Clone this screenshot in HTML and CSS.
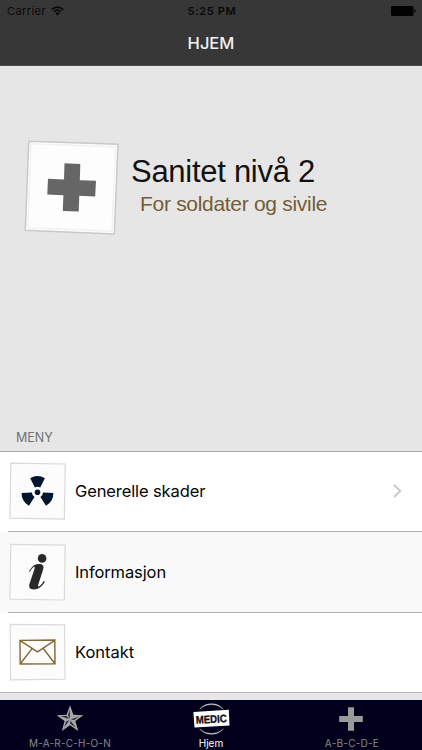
FILE: index.html
```html
<!DOCTYPE html>
<html lang="no">
<head>
<meta charset="utf-8">
<title>Hjem</title>
<link rel="stylesheet" href="styles.css">
</head>
<body>
<div class="app">
  <header class="topbar">
    <div class="status">
      <div class="carrier"><span class="carrier-name">Carrier</span>
        <svg class="wifi" width="13" height="10" viewBox="0 0 13 10" fill="none" stroke="#090909" stroke-width="1.7"><path d="M.8 3.5Q6.5-1.4 12.2 3.5M2.8 5.6Q6.5 2.5 10.2 5.6"/><path d="M4.3 7.2Q6.5 5.4 8.7 7.2L6.5 9.5Z" fill="#090909" stroke="none"/></svg>
      </div>
      <span class="time">5:25 PM</span>
      <svg class="battery" width="25" height="10" viewBox="0 0 25 10"><rect width="22.5" height="10" rx="1.5"/><path d="M23.3 3.2Q24.8 3.6 24.8 5T23.3 6.8Z"/></svg>
    </div>
    <h1 class="title">HJEM</h1>
  </header>
  <main class="content">
    <section class="hero">
      <svg class="hero-icon" width="96" height="97" viewBox="23 139 96 97"><path d="M28.8 141.2L118 144.3L114.3 234L25.3 230.3Z" fill="#fdfdfd" stroke="#c9c9c9" stroke-width="1.5"/><path d="M31 143.8L115.5 146.7L112 231.3L28 227.7Z" fill="none" stroke="#f2f2f2" stroke-width="1.5"/><path d="M64.5 163.3L80.3 164L79.8 180.2L96 180.8L95.2 196.5L79.3 195.7L78.7 211.5L62.8 211L63.4 195.2L47.3 194.5L48 178.7L64 179.4Z" fill="#666"/></svg>
      <div class="hero-text"><div class="name">Sanitet nivå 2</div><div class="tagline">For soldater og sivile</div></div>
    </section>
    <h2 class="section-title">MENY</h2>
    <ul class="menu">
      <li class="row">
        <svg class="tile" width="58" height="58" viewBox="0 0 58 58"><path d="M1.8 1.2L56.3 2L55.3 57.2L1 56.2Z" fill="#fcfcfc" stroke="#dadada" stroke-width="1.2"/><g fill="#04152f"><circle cx="28.5" cy="30.3" r="2.8"/><path id="blade" d="M25.9 25.4L21.2 16.2Q28.5 11.8 35.9 16.2L31.2 25.4Q28.5 24 25.9 25.4Z"/><use href="#blade" transform="rotate(120 28.5 30.3)"/><use href="#blade" transform="rotate(240 28.5 30.3)"/></g></svg>
        <span class="label general">Generelle skader</span>
        <svg class="chevron" width="9" height="14" viewBox="0 0 9 14" fill="none" stroke="#c7c7cc" stroke-width="1.9"><path d="M1 1L7.2 7L1 13"/></svg>
      </li>
      <li class="row alt">
        <svg class="tile" width="58" height="58" viewBox="0 0 58 58"><path d="M1.8 1.4L56.2 2.2L55.3 57L1 56.2Z" fill="#fcfcfc" stroke="#dadada" stroke-width="1.2"/><g fill="#292929"><circle cx="33.1" cy="15.4" r="4.3"/><path d="M20 28.5C22.7 23.4 25.7 21 30 21C34.7 21 35.1 23.2 34 27.1L29.3 41.4C28.6 43.9 29.9 43.9 31.2 42.6C32.7 41.2 33.7 39.7 34.7 38L35.8 38.8C33.2 43.6 29.2 46.5 24.9 46.5C20.4 46.5 19.4 44 20.7 40.3L25.4 26.3C26.2 23.8 25.4 23.2 24 24.6C22.8 25.7 22 27 21 28.7Z"/></g></svg>
        <span class="label info">Informasjon</span>
      </li>
      <li class="row">
        <svg class="tile" width="58" height="58" viewBox="0 0 58 58"><path d="M1.2 1.4L55.5 1.8L56 56.2L1.6 56.8Z" fill="#fcfcfc" stroke="#dadada" stroke-width="1.2"/><path d="M11 17.4L45.8 17.1L46 40.7L11.2 41ZM11.2 17.6L28.5 28.8L45.8 17.3M11.3 40.8L23 25.6M45.8 40.5L34.1 25.3" fill="none" stroke="#82693a" stroke-width="1.45"/></svg>
        <span class="label contact">Kontakt</span>
      </li>
    </ul>
  </main>
  <nav class="tabs">
    <a class="tab"><svg width="36" height="36" viewBox="0 0 36 36"><path d="M18 5.2L21.4 14.7L31.4 15.2L23.4 20.9L26.2 31L18 25.3L9.8 31L12.6 20.9L4.6 15.2L14.6 14.7Z" fill="#a6a6a8"/><path d="M17.8 9.5V19L16 15.2ZM18.8 19.4L27.5 16.2L22 20ZM18.2 20.6L23.8 27.6L18.2 23.8ZM17.3 20.2L12.3 27L14.2 21.5ZM16.9 19L8.5 16.1L14.6 16.1Z" fill="#242535"/></svg><span class="march">M-A-R-C-H-O-N</span></a>
    <a class="tab active"><svg class="medic" width="44" height="36" viewBox="-2 0 44 36"><path d="M8.7 9A15.8 15.8 0 0 1 32.3 9A17.5 17.5 0 0 0 8.7 9ZM8.7 29A15.8 15.8 0 0 0 32.3 29A17.5 17.5 0 0 1 8.7 29Z" fill="#ddd" stroke="#ddd" stroke-width=".4"/><path d="M2.4 12L37.8 9.7L38.5 25.6L3.5 27.5Z" fill="#fff"/><text x="4.7" y="23" transform="rotate(-3 20 19)" textLength="31" lengthAdjust="spacingAndGlyphs" font-family="Liberation Sans, sans-serif" font-size="11" font-weight="700" fill="#080817" stroke="#080817" stroke-width=".3">MEDIC</text></svg><span class="home">Hjem</span></a>
    <a class="tab"><svg width="36" height="36" viewBox="0 0 36 36"><path d="M14 7.3H20V16H28.8V22H20V30.7H14V22H5.2V16H14Z" fill="#999"/></svg><span class="abcde">A-B-C-D-E</span></a>
  </nav>
</div>
</body>
</html>
```
FILE: styles.css
```css
* { box-sizing: border-box; }
body { margin: 0; font-family: Inter, "Liberation Sans", sans-serif; }
.app { width: 422px; height: 750px; overflow: hidden; display: flex; flex-direction: column; background: #e6e6e6; }
.topbar { height: 66px; background: #373737; border-bottom: 1px solid #4b4b4b; flex: none; }
.status { height: 22px; display: grid; grid-template-columns: 1fr auto 1fr; align-items: center; padding: 0 6px 0 7px; color: #090909; font-size: 11px; line-height: 22px; }
.carrier { display: flex; align-items: center; gap: 5px; }
.carrier-name { letter-spacing: .4px; }
.wifi { margin-top: -1px; }
.time { font-weight: 600; letter-spacing: .65px; padding-left: 1px; }
.battery { justify-self: end; fill: #020202; }
.title { margin: 0; color: #f3f3f3; font-size: 16.5px; line-height: 43px; font-weight: 500; text-align: center; }
.content { height: 634px; flex: none; }
.hero { height: 349px; display: flex; padding: 73px 0 0 23px; font-family: "Liberation Sans", sans-serif; }
.hero-text { padding: 14px 0 0 12px; white-space: nowrap; }
.name { color: #111; font-size: 31px; line-height: 38px; letter-spacing: -.28px; }
.tagline { color: #735d37; font-size: 21px; line-height: 26px; padding-left: 9px; letter-spacing: -.3px; }
.section-title { margin: 0; padding: 12px 0 0 16px; height: 36px; font-size: 12.5px; line-height: 22px; font-weight: 400; color: #717175; }
.menu { margin: 0; padding: 0; list-style: none; border-top: 1px solid #a8a8a8; border-bottom: 1px solid #b7b7b7; background: #fff; height: 242px; }
.row { height: 80px; display: flex; align-items: center; padding: 0 20px 2px 9px; background: linear-gradient(#b5b5b5, #b5b5b5) 8px 100% / 100% 1px no-repeat #fff; }
.row:nth-child(2) { height: 81px; }
.row:last-child { height: 79px; background: #fff; }
.row.alt { background-color: #f9f9f9; }
.tile { flex: none; }
.label { margin-left: 8px; font-size: 16.5px; line-height: 24px; color: #050505; letter-spacing: -.11px; }
.contact { letter-spacing: 0; }
.chevron { margin-left: auto; }
.tabs { height: 50px; flex: none; display: grid; grid-template-columns: 140px 142px 140px; background: #00001c; }
.tab { display: flex; flex-direction: column; align-items: center; color: #89898d; font-size: 10px; line-height: 14px; }
.active { color: #fff; }
.medic { overflow: visible; }
.march { letter-spacing: .2px; }
.abcde { letter-spacing: .25px; }
```
